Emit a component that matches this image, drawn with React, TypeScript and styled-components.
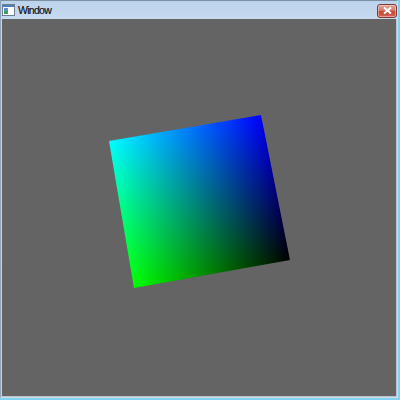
import * as React from "react"
import styled, { createGlobalStyle } from "styled-components"

const GlobalStyle = createGlobalStyle`
  html, body {
    margin: 0;
    padding: 0;
    background: #7fd3f3;
  }
  body {
    font-family: "Liberation Sans", "Noto Sans", sans-serif;
  }
`

const Frame = styled.div`
  width: 396px;
  height: 396px;
  display: flex;
  flex-direction: column;
  background: linear-gradient(to bottom, #bcd3ec 0px, #c6daef 18px, #c0d5ec 100%);
  border-left: 1px solid #8fa5bd;
  border-top: 1px solid #7d8fa3;
  border-right: 1px solid #d3dbe4;
  border-bottom: 1px solid #d3dbe4;
`

const TitleBar = styled.div`
  height: 18px;
  display: flex;
  align-items: center;
  padding: 0 0 0 1px;
  gap: 3px;
`

const TitleText = styled.span`
  flex: 1;
  font-size: 10.5px;
  color: #111111;
  letter-spacing: -0.7px;
  line-height: 1;
  -webkit-text-stroke: 0.2px #111111;
`

const CloseButton = styled.div`
  width: 18px;
  height: 12px;
  margin-top: 1px;
  border: 1px solid #7d3a36;
  border-radius: 3px;
  background: linear-gradient(to bottom, #e3a698 0%, #d57b6d 45%, #c5432f 55%, #d0685a 100%);
  display: flex;
  align-items: center;
  justify-content: center;
  box-shadow: inset 0 0 0 1px rgba(255, 220, 210, 0.5);
`

const Client = styled.div`
  position: relative;
  flex: 1;
  margin-left: 1px;
  background: #646464;
  border-bottom: 1px solid #b9c3ce;
  border-right: 1px solid #b9c3ce;
  overflow: hidden;
`

// projective map of a 100x100 square onto the four measured corners
const Quad = styled.div`
  position: absolute;
  left: 0;
  top: 0;
  width: 100px;
  height: 100px;
  transform-origin: 0 0;
  transform: matrix3d(
    1.542106, -0.251806, 0, 0.00008535,
    0.214059, 1.396757, 0, -0.00027228,
    0, 0, 1, 0,
    107, 122, 0, 1
  );
  background:
    linear-gradient(to right, #00ff00, #000000),
    linear-gradient(to bottom, #0000ff, #000000);
  background-blend-mode: screen;
`

const WindowIcon = () => (
  <svg width="13" height="12" viewBox="0 0 13 12">
    <rect x="0.5" y="0.5" width="12" height="11" fill="#ffffff" stroke="#6f7f8f" />
    <rect x="1" y="1" width="11" height="2" fill="#4a7fc0" />
    <rect x="2" y="4" width="4" height="6" fill="#3f9f62" />
    <rect x="2" y="4" width="4" height="3" fill="#5a8fd0" />
  </svg>
)

const CloseGlyph = () => (
  <svg width="9" height="7" viewBox="0 0 9 7">
    <path d="M1 0.5 L8 6.5 M8 0.5 L1 6.5" stroke="#ffffff" strokeWidth="2" />
  </svg>
)

export default function App() {
  return (
    <>
      <GlobalStyle />
      <Frame>
        <TitleBar>
          <WindowIcon />
          <TitleText>Window</TitleText>
          <CloseButton>
            <CloseGlyph />
          </CloseButton>
        </TitleBar>
        <Client>
          <Quad />
        </Client>
      </Frame>
    </>
  )
}
